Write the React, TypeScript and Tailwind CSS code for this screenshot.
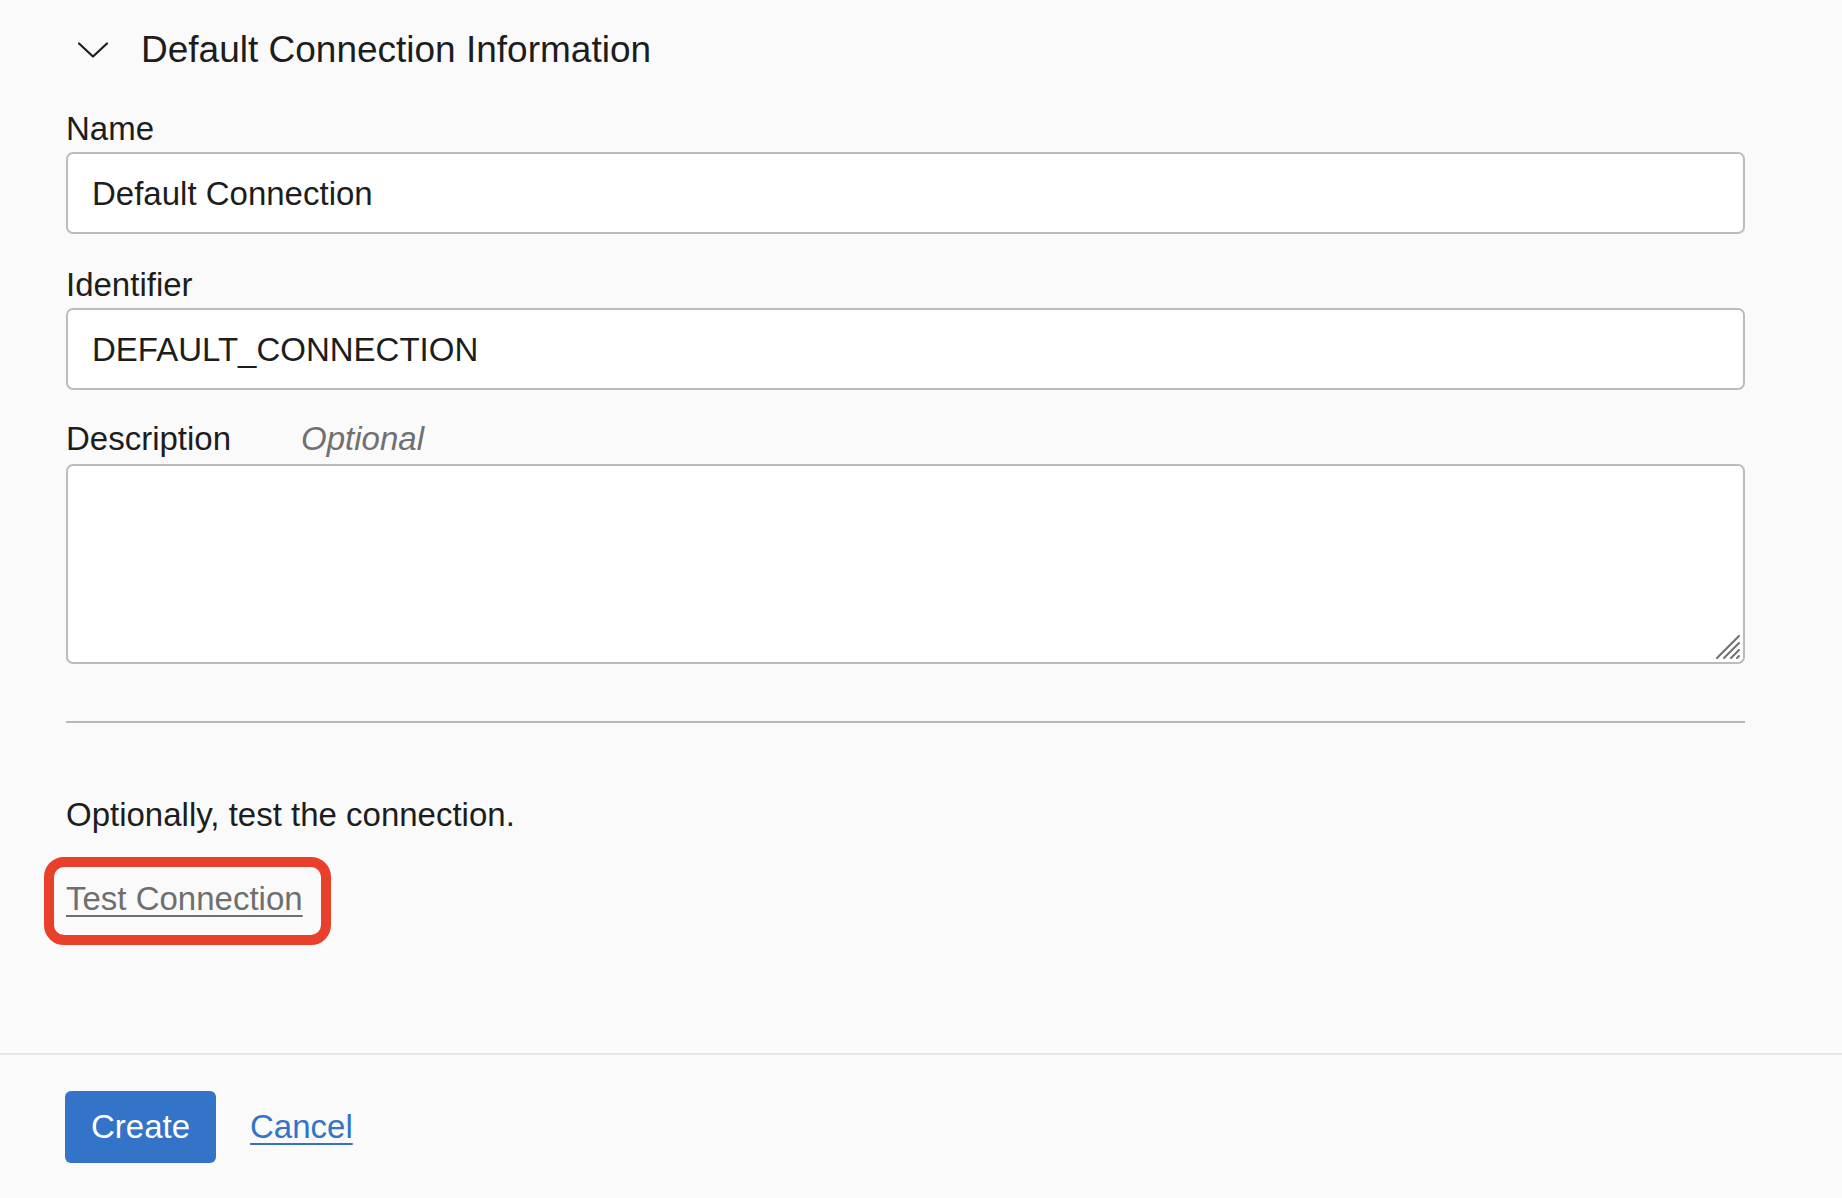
import React from 'react'

const font = { fontFamily: '"Liberation Sans", Arial, Helvetica, sans-serif' }

function Chevron() {
  return (
    <svg width="30" height="16" viewBox="0 0 30 16" fill="none">
      <polyline points="1,1.5 15,14.5 29,1.5" stroke="#1d1d1d" strokeWidth="2.2" strokeLinecap="round" strokeLinejoin="round" />
    </svg>
  )
}

/* textarea resize grip, drawn over the corner */
function Grip() {
  return (
    <svg className="absolute right-[4px] bottom-[4px] pointer-events-none" width="26" height="26" viewBox="0 0 26 26">
      <g stroke="#6f6f6f" strokeWidth="2" strokeLinecap="round">
        <line x1="2" y1="24" x2="24" y2="2" />
        <line x1="9" y1="24" x2="24" y2="9" />
        <line x1="16" y1="24" x2="24" y2="16" />
        <line x1="22" y1="24" x2="24" y2="22" />
      </g>
    </svg>
  )
}

function Field({ label, value, top }: { label: string; value: string; top: string }) {
  return (
    <div className={top}>
      <div className="h-[40px] leading-[40px] text-[33px]">{label}</div>
      <input
        readOnly
        value={value}
        className="mt-[3px] block w-full h-[82px] rounded-[7px] border-2 border-[#b9bdc2] bg-white px-[24px] pt-[2px] text-[33px] text-[#1d1d1d] outline-none"
        style={font}
      />
    </div>
  )
}

export default function App() {
  return (
    <div className="min-h-screen bg-[#fafafa] pt-[28px] text-[#1d1d1d]" style={font}>
      <div className="w-[1745px] pl-[66px]">
        {/* section header */}
        <div className="flex h-[44px] items-center">
          <span className="ml-[12px] flex"><Chevron /></span>
          <span className="ml-[33px] text-[37px] leading-[44px]">Default Connection Information</span>
        </div>

        <Field label="Name" value="Default Connection" top="mt-[37px]" />
        <Field label="Identifier" value="DEFAULT_CONNECTION" top="mt-[31px]" />

        <div className="mt-[29px]">
          <div className="flex h-[40px] items-center text-[33px] leading-[40px]">
            <span>Description</span>
            <span className="ml-[70px] italic text-[#707070]">Optional</span>
          </div>
          <div className="relative mt-[5px]">
            <textarea
              readOnly
              className="block w-full h-[200px] resize-none rounded-[7px] border-2 border-[#b9bdc2] bg-white px-[24px] py-[16px] text-[33px] outline-none"
              style={font}
            />
            <Grip />
          </div>
        </div>

        <div className="mt-[57px] h-[2px] bg-[#b5b9be]" />

        <p className="mt-[72px] h-[40px] text-[33px] leading-[40px]">Optionally, test the connection.</p>

        <div className="mt-[44px] h-[40px]">
          <span className="relative inline-block">
            <a href="#" className="text-[33px] leading-[40px] text-[#6f6f6f] underline decoration-[2px] underline-offset-[5px]">Test Connection</a>
            <span className="pointer-events-none absolute -left-[22px] -top-[22px] -right-[28px] -bottom-[26px] rounded-[20px] border-[10px] border-[#e8402a]" />
          </span>
        </div>
      </div>

      <div className="mt-[134px] h-[2px] bg-[#e6e6e6]" />

      <div className="flex items-center pl-[65px] pt-[36px] pb-[35px]">
        <button className="h-[72px] w-[151px] rounded-[6px] bg-[#3373c8] text-[33px] text-white" style={font}>Create</button>
        <a href="#" className="ml-[34px] text-[33px] text-[#3373c8] underline decoration-[2px] underline-offset-[5px]">Cancel</a>
      </div>
    </div>
  )
}
